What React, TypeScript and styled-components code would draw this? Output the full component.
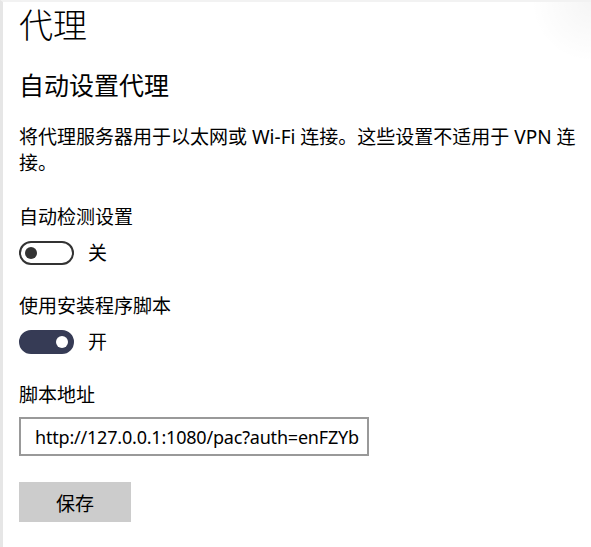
import React from "react";
import styled, { createGlobalStyle } from "styled-components";

const Global = createGlobalStyle`
  html, body { margin: 0; padding: 0; background: #fff; }
  body { font-family: "Noto Sans", "Noto Sans CJK SC", sans-serif; color: #000; }
`;

const Page = styled.div`
  box-sizing: border-box;
  width: 591px;
  height: 547px;
  border-left: 3px solid #e6e6e6;
  border-top: 2px solid #f2f2f2;
  padding-left: 16px;
  background: radial-gradient(circle at 100% 0, rgba(0,0,0,0.04), rgba(0,0,0,0) 60px) #fff;
  overflow: hidden;
`;

const Title = styled.h1`
  margin: 0;
  font-family: "Noto Sans CJK SC", sans-serif;
  font-weight: 300;
  font-size: 34px;
  line-height: 44px;
`;

const Subtitle = styled.h2`
  margin: 21px 0 0;
  font-family: "Noto Sans CJK SC", sans-serif;
  font-weight: 400;
  font-size: 25px;
  line-height: 34px;
`;

const Body = styled.p`
  margin: 23px 0 3px;
  padding-right: 12px;
  font-size: 19px;
  line-height: 26px;
`;

const Setting = styled.div<{ $gap: number }>`
  margin-top: 28px;
  display: flex;
  flex-direction: column;
  gap: ${(p) => p.$gap}px;
`;

const Label = styled.div`
  font-size: 19px;
  line-height: 26px;
`;

const ToggleRow = styled.div`
  display: flex;
  align-items: center;
  gap: 14px;
`;

const Track = styled.div<{ $on: boolean }>`
  box-sizing: border-box;
  width: 55px;
  height: 24px;
  border-radius: 12px;
  border: 2px solid ${(p) => (p.$on ? "#363b55" : "#333")};
  background: ${(p) => (p.$on ? "#363b55" : "#fff")};
  display: flex;
  align-items: center;
  justify-content: ${(p) => (p.$on ? "flex-end" : "flex-start")};
  padding: 0 4px;
`;

const Knob = styled.div<{ $on: boolean }>`
  width: 12px;
  height: 12px;
  border-radius: 50%;
  background: ${(p) => (p.$on ? "#fff" : "#333")};
`;

const State = styled.span`
  font-size: 19px;
  line-height: 24px;
`;

const Input = styled.div`
  box-sizing: border-box;
  width: 350px;
  height: 39px;
  border: 2px solid #999;
  padding: 0 12px 0 14px;
  display: flex;
  align-items: center;
  overflow: hidden;
  white-space: nowrap;
  font-size: 18px;
  letter-spacing: -0.2px;
`;

const Button = styled.button`
  display: block;
  margin-top: 26px;
  width: 112px;
  height: 40px;
  border: none;
  background: #cccccc;
  font-family: "Noto Sans CJK SC", sans-serif;
  font-size: 19px;
  color: #000;
  padding: 0;
`;

function Toggle({ on, text }: { on: boolean; text: string }) {
  return (
    <ToggleRow>
      <Track $on={on}>
        <Knob $on={on} />
      </Track>
      <State>{text}</State>
    </ToggleRow>
  );
}

export default function App() {
  return (
    <>
      <Global />
      <Page>
        <Title>代理</Title>
        <Subtitle>自动设置代理</Subtitle>
        <Body>将代理服务器用于以太网或 Wi-Fi 连接。这些设置不适用于 VPN 连接。</Body>
        <Setting $gap={11}>
          <Label>自动检测设置</Label>
          <Toggle on={false} text="关" />
        </Setting>
        <Setting $gap={11}>
          <Label>使用安装程序脚本</Label>
          <Toggle on={true} text="开" />
        </Setting>
        <Setting $gap={9}>
          <Label>脚本地址</Label>
          <Input>http://127.0.0.1:1080/pac?auth=enFZYb</Input>
        </Setting>
        <Button>保存</Button>
      </Page>
    </>
  );
}
